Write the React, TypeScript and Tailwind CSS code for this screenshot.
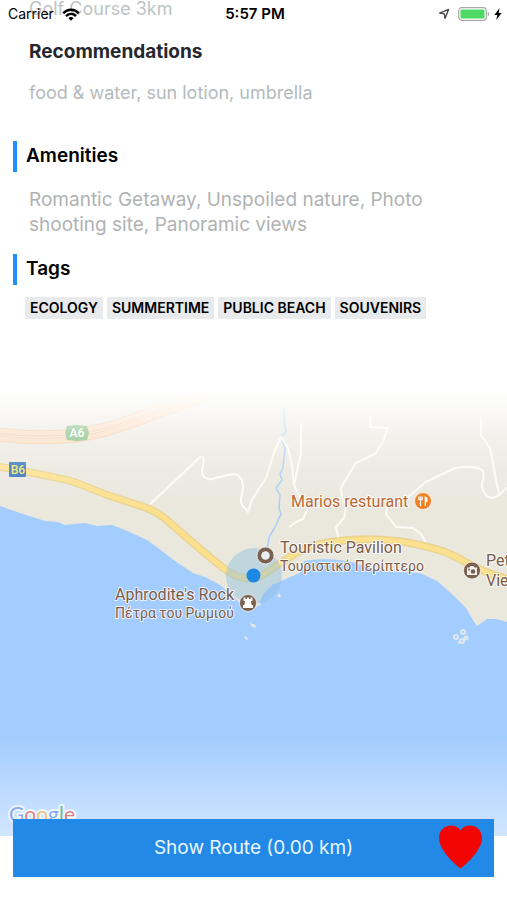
import type { ReactNode } from 'react';

const TAGS = ['ECOLOGY', 'SUMMERTIME', 'PUBLIC BEACH', 'SOUVENIRS'];

const YELLOW_ROAD =
  'M-4 466C12 469 40 474 67 480C82 484 96 491 110 496L147 508C156 512 163 516 169 522L200 549L222 567C234 577 244 580 255 578C266 575 274 566 286 560C298 550 316 543 340 541C360 538 390 539 410 543C428 547 444 550 456 557C476 568 490 575 511 580';

const MOTORWAY = 'M-4 434C24 438 48 438 70 436C104 433 134 420 162 410C178 404 190 400 202 395';

const TRAILS = [
  'M147 507L200 457C206 456 203 464 202 470C202 476 205 480 212 479L232 474C240 474 243 480 243 488C242 496 239 500 242 505L248 512C251 506 250 500 255 495L266 478L275 450L281 437L288 448L292 465L294 485L297 492L308 508L303 519L296 522L289 527',
  'M301 423V453L294 485',
  'M371 415L370 427L387 428L384 440L375 454L356 463L349 474L341 488L342 497L346 507L344 518L336 527L339 541',
  'M481 417V435L490 448L499 495L511 484',
  'M499 495C492 500 486 498 483 490C479 482 487 476 482 470C474 465 464 467 455 468L426 482L408 497L387 506L386 514L396 527L413 528L421 534L428 546',
];

function StatusBar() {
  return (
    <header className="absolute inset-x-0 top-0 z-10 grid h-7 grid-cols-3 items-center pr-[5px] pl-2 text-sm text-black">
      <div className="flex items-center gap-2">
        <span>Carrier</span>
        <svg viewBox="0 0 18 13" className="h-[13px] w-[18px]" aria-hidden="true">
          <g fill="none" stroke="currentColor" strokeWidth="2.3">
            <path d="M1.2 5.2C5.6 .6 12.4 .6 16.8 5.2" />
            <path d="M4 8.1C7 5.2 11 5.2 14 8.1" />
          </g>
          <path d="M9 12.8L6.3 10C7.9 8.6 10.1 8.6 11.7 10Z" fill="currentColor" />
        </svg>
      </div>
      <span className="text-center text-[15px] font-semibold">5:57 PM</span>
      <div className="flex items-center justify-end">
        <svg viewBox="0 0 12 12" className="mr-2 size-3" aria-hidden="true">
          <path d="M10.6 1.4L7 10.4L6.3 5.9L1.6 5.2Z" fill="none" stroke="#444" strokeWidth="1.3" strokeLinejoin="round" />
        </svg>
        <svg viewBox="0 0 32 14" className="mr-1 h-[14px] w-8" aria-hidden="true">
          <rect x=".7" y=".7" width="27.6" height="12.6" rx="3" fill="#fff" stroke="#aaa" strokeWidth="1.2" />
          <rect x="2.5" y="2.5" width="24" height="9" rx="1" fill="#4cd964" />
          <path d="M29.7 4.7C31.6 5.4 31.6 8.6 29.7 9.3Z" fill="#aaa" />
        </svg>
        <svg viewBox="0 0 8 12" className="h-3 w-2" aria-hidden="true">
          <path d="M5.6 0L.4 6.9H3.4L2.2 12L7.6 4.9H4.6Z" fill="#000" />
        </svg>
      </div>
    </header>
  );
}

function SectionTitle({ children }: { children: ReactNode }) {
  return (
    <h2 className="ml-[13px] flex h-[31px] items-center border-l-4 border-[#1e90ff] pl-[9px] text-[19px] font-semibold text-black">
      {children}
    </h2>
  );
}

function AreaMap() {
  return (
    <svg
      viewBox="0 390 507 446"
      preserveAspectRatio="xMidYMid slice"
      className="block h-[446px] w-full"
      role="img"
      aria-label="Map"
    >
      <defs>
        <linearGradient id="fadeTop" x1="0" y1="0" x2="0" y2="1">
          <stop offset="0" stopColor="#fff" />
          <stop offset=".08" stopColor="#fff" stopOpacity=".9" />
          <stop offset=".35" stopColor="#fff" stopOpacity=".45" />
          <stop offset=".65" stopColor="#fff" stopOpacity=".15" />
          <stop offset="1" stopColor="#fff" stopOpacity="0" />
        </linearGradient>
        <linearGradient id="fadeBottom" x1="0" y1="0" x2="0" y2="1">
          <stop offset="0" stopColor="#fff" stopOpacity="0" />
          <stop offset="1" stopColor="#fff" stopOpacity=".55" />
        </linearGradient>
      </defs>

      <rect x="-10" y="380" width="527" height="466" fill="#eae7dd" />
      <path
        d="M-10 503L0 506L20 513L45 521L58 522L65 525L85 523L97 526L112 525L125 530L147 540L158 548L175 561L193 573L205 577L220 585L231 594L240 603L248 611L258 606L263 594L272 585L288 578L300 573L304 561C320 558 340 559 352 562L380 571L400 572L420 573L437 581L454 596L466 608L473 620L477 626L487 619L496 619L507 622L517 625V846H-10Z"
        fill="#a3ccff"
      />
      <path
        d="M284 408L284 420L286 432L281 437L285 448L283 468L280 474L282 480L276 488L280 495L279 508L281 514L276 525L269 538L267 549"
        fill="none"
        stroke="#a9cdf8"
        strokeWidth="1.5"
      />
      <g fill="none" stroke="#fcfbf5" strokeWidth="2" strokeLinejoin="round">
        {TRAILS.map((d) => (
          <path key={d} d={d} />
        ))}
      </g>

      <g fill="none">
        <path d={MOTORWAY} stroke="#f2c6a0" strokeWidth="14" />
        <path d={MOTORWAY} stroke="#fbd9b8" strokeWidth="12" />
        <path d={MOTORWAY} stroke="#f2c6a0" strokeWidth="3" />
        <path d={MOTORWAY} stroke="#fbe8d2" strokeWidth="1" />
        <path d={YELLOW_ROAD} stroke="#e9d391" strokeWidth="8" />
        <path d={YELLOW_ROAD} stroke="#fbe08d" strokeWidth="5" />
      </g>

      <path d="M67 426L77 425L87 426L89 433L87 440L77 441L67 440L65 433Z" fill="#71b36f" />
      <rect x="9" y="462" width="17" height="15" rx="1" fill="#3474bf" />
      <g fontFamily="Roboto, sans-serif" fontSize="12" fontWeight="500" textAnchor="middle">
        <text x="77" y="437" fill="#fff">A6</text>
        <text x="18" y="474" fill="#f5e663">B6</text>
      </g>

      {/* rocks off the shore */}
      <g fill="#dfe6e6">
        <path d="M249 622L252 624L255 624L256 628L252 627Z" />
        <path d="M244 636L247 637L248 640L245 639Z" />
        <path d="M277 596L279 593L281 596L279 598Z" />
        <path d="M257 601L260 603L261 606L258 605Z" />
      </g>
      <g fill="none" stroke="#dfe8ee" strokeWidth="2">
        <circle cx="463" cy="632" r="2" />
        <circle cx="456" cy="637" r="2" />
        <circle cx="462" cy="641" r="2" />
        <circle cx="466" cy="638" r="1.5" />
        <path d="M453 637H455M458 643L460 642" />
      </g>

      <circle cx="254" cy="576" r="28" fill="#8fc0df" fillOpacity=".45" />
      <circle cx="253.5" cy="575.5" r="7" fill="#1e88e5" />

      <g stroke="#fff" strokeOpacity=".7" strokeWidth="1">
        <circle cx="265.5" cy="555.5" r="8.5" fill="#79604f" />
        <circle cx="248" cy="603" r="8.5" fill="#79604f" />
        <circle cx="472" cy="570.5" r="8.5" fill="#79604f" />
        <circle cx="423" cy="501" r="8.5" fill="#ee7d1b" />
      </g>
      <circle cx="265.5" cy="555.5" r="4.3" fill="#e9f0f4" />
      <path d="M243.5 597.5H245.5V599H247V597.5H249V599H250.5V597.5H252.5V601H251L251.5 605H253V608H243V605H244.5L245 601H243.5Z" fill="#fff" />
      <path d="M467 567.5H469.5L470.5 566H473.5L474.5 567.5H477V575H467Z" fill="#f4efe9" />
      <circle cx="473" cy="571.5" r="2.3" fill="#79604f" />
      <circle cx="469" cy="569.5" r="1" fill="#79604f" />
      <g fill="none" stroke="#fff">
        <path d="M418.8 496.5V499.5H422.2V496.5M420.5 496.5V506" strokeWidth="1.2" />
        <path d="M425.3 506V497C427.3 497.5 427.3 500 426.8 501.5H425.3" fill="#fff" strokeWidth="1.2" />
      </g>

      <g
        fontFamily="Roboto, sans-serif"
        fill="#795c4a"
        stroke="#fff"
        strokeOpacity=".8"
        strokeWidth="2"
        strokeLinejoin="round"
        paintOrder="stroke"
      >
        <g fontSize="16">
          <text x="291" y="507" fill="#b5622b">Marios resturant</text>
          <text x="280" y="553">Touristic Pavilion</text>
          <text x="234" y="600" textAnchor="end">Aphrodite's Rock</text>
          <text x="486" y="566">Pet</text>
          <text x="486" y="586">Vie</text>
        </g>
        <g fontSize="14">
          <text x="280" y="571">Τουριστικό Περίπτερο</text>
          <text x="234" y="618" textAnchor="end">Πέτρα του Ρωμιού</text>
        </g>
      </g>

      <rect x="-10" y="390" width="527" height="125" fill="url(#fadeTop)" />
      <rect x="-10" y="735" width="527" height="111" fill="url(#fadeBottom)" />

      <text
        x="9"
        y="822"
        fontFamily="Lato, sans-serif"
        fontSize="21"
        opacity=".7"
        stroke="#fff"
        strokeWidth="4"
        strokeLinejoin="round"
        paintOrder="stroke"
      >
        <tspan fill="#6f93e8">G</tspan>
        <tspan fill="#e5594e">o</tspan>
        <tspan fill="#f2bd3a">o</tspan>
        <tspan fill="#6f93e8">g</tspan>
        <tspan fill="#52ab66">l</tspan>
        <tspan fill="#e5594e">e</tspan>
      </text>
    </svg>
  );
}

export default function App() {
  return (
    <div className="relative min-h-screen overflow-hidden bg-white font-['Inter',sans-serif]">
      <StatusBar />

      <main>
        <p className="px-[29px] pb-[18px] text-lg leading-[18px] text-[#c0c3c5]">Golf Course 3km</p>
        <h2 className="px-[29px] text-[19px] leading-[31px] font-bold text-[#24272e]">Recommendations</h2>
        <p className="px-[29px] pt-[14px] pb-9 text-lg leading-6 text-[#b5babd]">food &amp; water, sun lotion, umbrella</p>

        <SectionTitle>Amenities</SectionTitle>
        <p className="px-[29px] pt-[15px] pb-[17px] text-[19px] leading-[25px] text-[#b0b2b4]">
          Romantic Getaway, Unspoiled nature, Photo shooting site, Panoramic views
        </p>

        <SectionTitle>Tags</SectionTitle>
        <ul className="mt-3 flex flex-wrap gap-1 px-[25px]">
          {TAGS.map((tag) => (
            <li key={tag} className="bg-[#e9eaec] px-[5px] text-sm leading-[22px] font-semibold text-black">
              {tag}
            </li>
          ))}
        </ul>

        <div className="mt-[71px]">
          <AreaMap />
        </div>

        <div className="relative mx-[13px] -mt-[17px]">
          <button type="button" className="h-[58px] w-full bg-[#2389e7] text-[19px] text-[#eaf6ff]">
            Show Route (0.00 km)
          </button>
          <button type="button" aria-label="Favourite" className="absolute top-[6px] right-3">
            <svg viewBox="0 0 43 44" className="h-[44px] w-[43px]" aria-hidden="true">
              <path
                d="M21.5 43.5C20 42.6 8 32.5 3.5 24C1.2 20 0 17 0 13C0 5.500 5.5 .5 12 .5C16 .5 19.500 2.3 21.5 5.5C23.5 2.3 27 .5 31 .5C37.5 .5 43 5.5 43 13C43 17 41.8 20 39.5 24C35 32.5 23 42.6 21.5 43.5Z"
                fill="#f20505"
              />
            </svg>
          </button>
        </div>
      </main>
    </div>
  );
}
